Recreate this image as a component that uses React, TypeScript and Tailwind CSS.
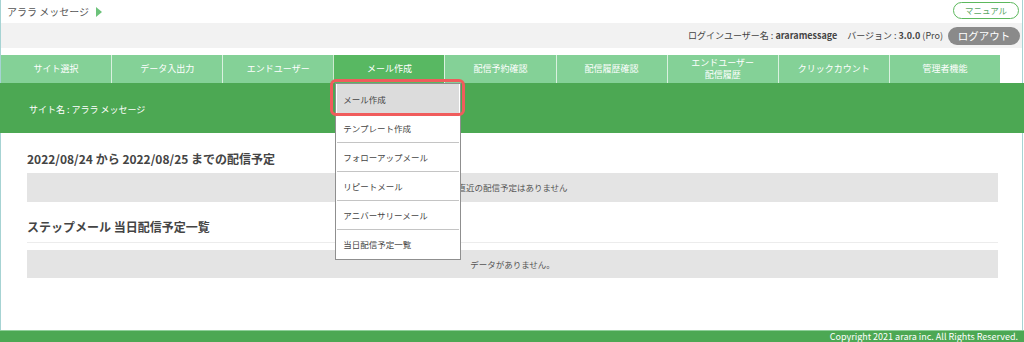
import React from 'react';

const tabs = [
    'サイト選択',
    'データ入出力',
    'エンドユーザー',
    'メール作成',
    '配信予約確認',
    '配信履歴確認',
    'エンドユーザー\n配信履歴',
    'クリックカウント',
    '管理者機能',
];

const menuItems = [
    'メール作成',
    'テンプレート作成',
    'フォローアップメール',
    'リピートメール',
    'アニバーサリーメール',
    '当日配信予定一覧',
];

const App: React.FC = () => {
    return (
        <div
            className="w-[1024px] h-[342px] bg-white text-[#555] flex flex-col overflow-hidden"
            style={{ fontFamily: '"Noto Sans CJK JP", "Noto Sans", sans-serif' }}
        >
            {/* header */}
            <div className="border-x border-[#a6d3d3] mr-[1px]">
                <div className="h-[23px] flex items-center justify-between pl-[6px] pr-[3px]">
                    <div className="flex items-center gap-[7px] text-[10px] text-[#555]">
                        <span>アララ メッセージ</span>
                        <span className="w-0 h-0 border-y-[5px] border-y-transparent border-l-[6px] border-l-[#6cc27a]" />
                    </div>
                    <button className="w-[66px] h-[17px] mt-[-2px] rounded-full border border-[#5cb85c] text-[#5aa864] text-[8.5px] leading-none flex items-center justify-center">
                        マニュアル
                    </button>
                </div>
                <div className="h-[25px] bg-[#f2f2f2] flex items-center justify-end pr-[2px] gap-[5px] text-[9px] text-[#444]">
                    <span>
                        ログインユーザー名 : <b className="font-bold">araramessage</b>
                        <span className="ml-[10px]">バージョン : </span>
                        <b className="font-bold">3.0.0</b> (Pro)
                    </span>
                    <span className="w-[72px] h-[18px] rounded-full bg-[#8a8a8a] text-white text-[10.5px] flex items-center justify-center">
                        ログアウト
                    </span>
                </div>
                <div className="h-[7px]" />
                <div className="flex h-[28px] w-[999px]">
                    {tabs.map((t, i) => (
                        <div
                            key={t}
                            className={`relative flex-1 flex items-center justify-center text-center whitespace-pre-line text-white text-[9px] leading-[12px] ${i > 0 ? 'border-l border-[#ffffff]/70' : ''} ${i === 3 ? 'bg-[#58b862]' : 'bg-[#84d197]'}`}
                        >
                            {t}
                            {i === 3 && (
                                <div className="absolute left-[1px] top-[28px] z-10">
                                    <div className="absolute left-[-5px] top-[-4px] w-[135px] h-[37px] rounded-[6px] border-[3px] border-[#f05c5c] z-20" />
                                    <div className="w-[126px] bg-white border border-[#8f8f8f] text-left text-[8.5px] text-[#444] pb-[1px]">
                                        {menuItems.map((m, j) => (
                                            <div
                                                key={m}
                                                className={`h-[29px] flex items-center pl-[6px] ${j === 0 ? 'bg-[#dcdcdc] mx-[1px] pl-[5px]' : 'mx-[1px] border-t border-[#c4c4c4]'}`}
                                            >
                                                {m}
                                            </div>
                                        ))}
                                    </div>
                                </div>
                            )}
                        </div>
                    ))}
                </div>
            </div>

            {/* site band */}
            <div className="h-[50px] bg-[#4ca853] flex items-center pl-[29px] pt-[4px] text-white text-[9px]">
                サイト名 : アララ メッセージ
            </div>

            {/* content */}
            <div className="flex-1 border-x border-[#a6d3d3] mr-[1px] pl-[26px] pr-[24px]">
                <h2 className="mt-[18px] h-[16px] flex items-center text-[12px] font-bold text-[#444]">
                    2022/08/24 から 2022/08/25 までの配信予定
                </h2>
                <div className="mt-[6px] h-[29px] bg-[#e4e4e4] flex items-center justify-center text-[8.5px] text-[#555]">
                    直近の配信予定はありません
                </div>
                <h2 className="mt-[17px] h-[16px] flex items-center text-[12px] font-bold text-[#444]">
                    ステップメール 当日配信予定一覧
                </h2>
                <div className="mt-[7px] border-t border-[#ececec]" />
                <div className="mt-[7px] h-[28px] bg-[#e4e4e4] flex items-center justify-center text-[8.5px] text-[#555]">
                    データがありません。
                </div>
            </div>

            {/* footer */}
            <div className="h-[12px] bg-[#4ca853] border-t border-[#8fd09a] flex items-center justify-end pr-[6px] text-white text-[9px] leading-none">
                Copyright 2021 arara inc. All Rights Reserved.
            </div>
        </div>
    );
};

export default App;
